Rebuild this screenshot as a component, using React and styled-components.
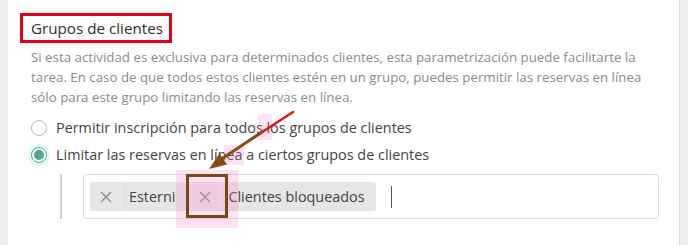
import React from 'react'
import styled, { createGlobalStyle } from 'styled-components'

const GlobalStyle = createGlobalStyle`
  html, body {
    margin: 0;
    padding: 0;
    background: #ffffff;
    font-family: "Open Sans", "Noto Sans", sans-serif;
  }
`

const Page = styled.div`
  position: relative;
  display: flex;
  width: 688px;
  height: 245px;
  overflow: hidden;
  background: #fff;
`

const SideStrip = styled.div`
  width: ${p => p.w}px;
  background: #eceef2;
  border-left: ${p => (p.edge ? '1px solid #dcdde4' : 'none')};
  flex-shrink: 0;
`

const Main = styled.div`
  flex: 1;
  padding: 13px 0 0 12px;
`

const TitleBox = styled.div`
  display: inline-flex;
  align-items: center;
  height: 24px;
  padding: 0 6px 0 8px;
  border: 3px solid #e3001b;
`

const Title = styled.h3`
  margin: 0;
  font-size: 15.2px;
  font-weight: 500;
  color: #2e2e2e;
`

const Description = styled.p`
  margin: 4px 0 0 11px;
  width: 625px;
  font-size: 13.3px;
  line-height: 20px;
  color: #8a8a8a;
`

const Options = styled.div`
  margin: 7px 0 0 11px;
  display: flex;
  flex-direction: column;
`

const OptionRow = styled.label`
  display: flex;
  align-items: center;
  height: 27px;
  gap: 9px;
  font-size: 14.4px;
  color: #444;
`

const Radio = styled.span`
  position: relative;
  box-sizing: border-box;
  width: 16px;
  height: 16px;
  border-radius: 50%;
  border: 1.5px solid ${p => (p.checked ? '#4caa8b' : '#b5b5b5')};
  background: #fff;
  box-shadow: ${p => (p.checked ? '0 0 0 3px #e3f8f2' : 'none')};

  &::after {
    content: '';
    display: ${p => (p.checked ? 'block' : 'none')};
    position: absolute;
    inset: 2px;
    border-radius: 50%;
    background: #4caa8b;
  }
`

const SelectRow = styled.div`
  display: flex;
  align-items: stretch;
  margin: 6px 0 0 40px;
  gap: 21px;
`

const Rule = styled.div`
  width: 2px;
  background: #cfcfcf;
`

const TagInput = styled.div`
  display: flex;
  align-items: center;
  box-sizing: border-box;
  width: 576px;
  height: 45px;
  padding: 0 6px;
  border: 1px solid #dcdcdc;
  border-radius: 4px;
  gap: 3px;
`

const Tag = styled.div`
  display: flex;
  align-items: stretch;
  height: 29px;
  background: #e6e6e6;
  border-radius: 3px;
  font-size: 14.4px;
  color: #444;
`

const TagRemove = styled.span`
  display: flex;
  align-items: center;
  justify-content: center;
  width: 31px;
  border-right: 1px solid #f2f2f2;
  color: #8a8a8a;
`

const TagLabel = styled.span`
  display: flex;
  align-items: center;
  padding: 0 ${p => p.pr}px 0 7px;
`

const Caret = styled.span`
  width: 1px;
  height: 22px;
  margin-left: 12px;
  background: #555;
`

const Highlight = styled.div`
  position: absolute;
  left: ${p => p.x}px;
  top: ${p => p.y}px;
  width: ${p => p.w}px;
  height: ${p => p.h}px;
  background: rgba(255, 120, 200, 0.22);
`

const FocusBox = styled.div`
  position: absolute;
  left: 186px;
  top: 174px;
  width: 42px;
  height: 44px;
  box-sizing: border-box;
  border: 3px solid #7a4712;
`

const Arrow = styled.svg`
  position: absolute;
  left: 0;
  top: 0;
  pointer-events: none;
`

function Cross() {
  return (
    <svg width="12" height="12" viewBox="0 0 12 12">
      <path d="M1 1 L11 11 M11 1 L1 11" stroke="#8a8a8a" strokeWidth="1.3" />
    </svg>
  )
}

export default function App() {
  return (
    <Page>
      <GlobalStyle />
      <SideStrip w={8} />
      <Main>
        <TitleBox>
          <Title>Grupos de clientes</Title>
        </TitleBox>
        <Description>
          Si esta actividad es exclusiva para determinados clientes, esta parametrización puede facilitarte la
          tarea. En caso de que todos estos clientes estén en un grupo, puedes permitir las reservas en línea
          sólo para este grupo limitando las reservas en línea.
        </Description>
        <Options>
          <OptionRow>
            <Radio />
            Permitir inscripción para todos los grupos de clientes
          </OptionRow>
          <OptionRow>
            <Radio checked />
            Limitar las reservas en línea a ciertos grupos de clientes
          </OptionRow>
        </Options>
        <SelectRow>
          <Rule />
          <TagInput>
            <Tag>
              <TagRemove><Cross /></TagRemove>
              <TagLabel pr={11}>Esterni</TagLabel>
            </Tag>
            <Tag>
              <TagRemove><Cross /></TagRemove>
              <TagLabel pr={11}>Clientes bloqueados</TagLabel>
            </Tag>
            <Caret />
          </TagInput>
        </SelectRow>
      </Main>
      <SideStrip w={8} edge />

      <Highlight x={176} y={170} w={62} h={58} />
      <Highlight x={224} y={145} w={20} h={20} />
      <Highlight x={258} y={114} w={14} h={26} />
      <FocusBox />
      <Arrow width="688" height="245">
        <line x1="293" y1="112" x2="250" y2="140" stroke="#e01414" strokeWidth="2.5" strokeLinecap="round" />
        <line x1="262" y1="132" x2="220" y2="160" stroke="#8a4a14" strokeWidth="3" strokeLinecap="round" />
        <polygon points="209,169 219.5,153.5 227,164.5" fill="#8a4a14" />
      </Arrow>
    </Page>
  )
}
